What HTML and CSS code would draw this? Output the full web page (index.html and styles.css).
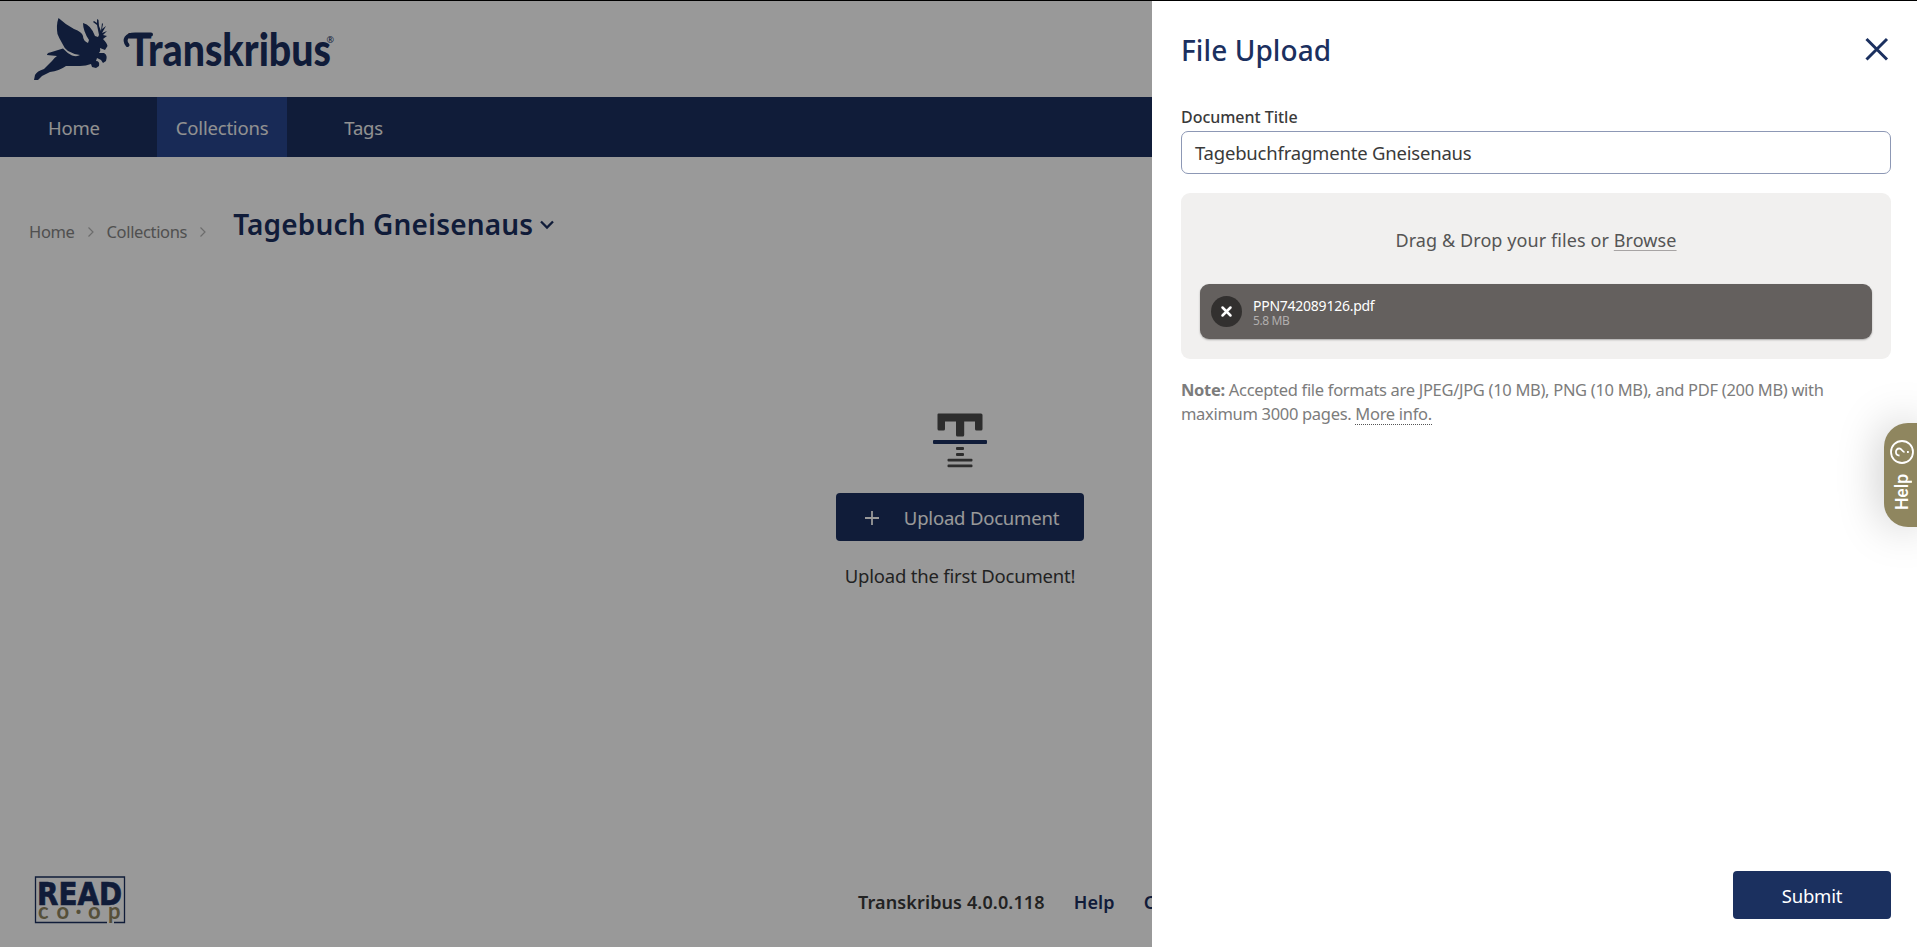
FILE: index.html
```html
<!DOCTYPE html>
<html lang="en">
<head>
<meta charset="utf-8">
<title>Transkribus</title>
<link rel="stylesheet" href="styles.css">
</head>
<body>
<div class="app">
  <header class="header">
    <svg class="logo" width="310" height="72" viewBox="30 12 310 72" aria-label="Transkribus">
      <path d="M34 80 L35 75 Q37 71 44 69 L52 61 Q54 58 57 56 L47 55 Q47 53 50 52.500 L63 48.500 Q67 53 72 55.500 Q77 57 80 55 Q73 54 68 51 Q64 48 62 43 Q59 38 57.500 34 Q56 25 58.500 18 Q66 25 74 29 Q82 32 83 36 Q83 41 88 43 L89 40 Q83 31 83 23 Q91 25 95 36 L98 37 L99 35 L97 25 L93 22 L94 21 L97 23 L97 19 L98.500 20 L99 26 L101 31 L102 23 L103 24 L102 29 L106 26 L102 33 L107 31 L103 35 L107 36 L103 39 Q107 43 107.500 46 L105 50 L100 48 Q101 51 99 53 L104 53 Q108 55 106 61 L103 63 L101 60 L97 58 L96 61 Q100 61 99 66 L96 68 L92 67 L91 64 Q86 66 80 66 L66 66 Q59 71 50 72 L42 76 L38 80 Z"/>
      <path class="swash" d="M127.500 45 C123.500 40 126 34.500 135 34.500 L151 34.500"/>
      <text class="logo-text" x="128" y="66" textLength="203" lengthAdjust="spacingAndGlyphs">Transkribus</text>
      <text class="logo-mark" x="326.500" y="42.500">®</text>
    </svg>
  </header>
  <nav class="nav">
    <a class="nav-item">Home</a>
    <a class="nav-item active">Collections</a>
    <a class="nav-item">Tags</a>
  </nav>
  <div class="breadcrumbs">
    <span class="crumb">Home</span>
    <svg class="sep" width="8" height="12" viewBox="0 0 8 12"><path d="M1.500 1.500 L6 6 L1.500 10.500"/></svg>
    <span class="crumb">Collections</span>
    <svg class="sep" width="8" height="12" viewBox="0 0 8 12"><path d="M1.500 1.500 L6 6 L1.500 10.500"/></svg>
    <h1>Tagebuch Gneisenaus</h1>
    <svg class="caret" width="16" height="10" viewBox="0 0 16 10"><path d="M2 1.500 L8 7.500 L14 1.500"/></svg>
  </div>
  <main class="empty">
    <svg class="t-icon" width="56" height="56" viewBox="0 0 56 56">
      <path class="ink" d="M6.500 1.500 H49 Q50.500 1.500 50.500 3 V17 Q50.500 18.500 49 18.500 H44.500 Q43 18.500 43 17 V9.500 H32.200 V23 Q32.200 24.500 30.700 24.500 H25.500 Q24 24.500 24 23 V9.500 H13 V17 Q13 18.500 11.500 18.500 H7 Q5.500 18.500 5.500 17 V2.500 Q5.500 1.500 6.500 1.500 Z"/>
      <rect class="bar" x="1" y="28" width="54" height="4" rx="1"/>
      <rect class="ink" x="24" y="35" width="8" height="3" rx="1"/>
      <rect class="ink" x="24" y="41" width="8" height="3" rx="1"/>
      <rect class="ink" x="15.500" y="46.700" width="25" height="2.800" rx="1"/>
      <rect class="ink" x="15.500" y="52.500" width="25" height="2.800" rx="1"/>
    </svg>
    <button class="btn upload">
      <svg width="16" height="16" viewBox="0 0 16 16"><path d="M8 1 V15 M1 8 H15"/></svg>
      <span>Upload Document</span>
    </button>
    <p class="first">Upload the first Document!</p>
  </main>
  <footer class="footer">
    <svg class="read" width="93" height="49" viewBox="0 0 93 49" aria-label="READ co-op">
      <path class="frame" d="M73 46.500 H1.500 V1 H90.500 V46.500 H80"/>
      <text class="read-a" x="3" y="28.500" textLength="85" lengthAdjust="spacingAndGlyphs">READ</text>
      <text class="read-b" x="4 22.500 41.500 54 74" y="43">co·op</text>
    </svg>
    <div class="footer-links"><span>Transkribus 4.0.0.118</span><a>Help</a><a>Contact</a></div>
  </footer>
</div>
<div class="overlay"></div>
<aside class="panel">
  <div class="panel-head">
    <h2>File Upload</h2>
    <svg width="24" height="24" viewBox="0 0 24 24"><path d="M1.500 2 L22 22.500 M22 2 L1.500 22.500"/></svg>
  </div>
  <label class="label">Document Title</label>
  <div class="input">Tagebuchfragmente Gneisenaus</div>
  <div class="drop">
    <div class="drop-label">Drag &amp; Drop your files or <span>Browse</span></div>
    <div class="file">
      <svg width="31" height="31" viewBox="0 0 31 31"><circle cx="15.500" cy="15.500" r="15.500"/><path d="M11.500 11.500 L19.500 19.500 M19.500 11.500 L11.500 19.500"/></svg>
      <div class="file-info"><div class="file-name">PPN742089126.pdf</div><div class="file-size">5.8 MB</div></div>
    </div>
  </div>
  <p class="note"><b>Note:</b> Accepted file formats are JPEG/JPG (10 MB), PNG (10 MB), and PDF (200 MB) with<br>maximum 3000 pages. <a>More info.</a></p>
  <button class="btn submit"><span>Submit</span></button>
</aside>
<div class="help">
  <svg width="24" height="24" viewBox="0 0 24 24"><circle cx="12" cy="12" r="11"/><path d="M8.500 9.500 C8.500 4.800 15.500 4.800 15.500 9.200 C15.500 12 12 12 12 14.500"/><path d="M12 17 V18.800"/></svg>
  <span>Help</span>
</div>
</body>
</html>
```
FILE: styles.css
```css
* { box-sizing: border-box; }
body {
  margin: 0;
  width: 1917px;
  height: 947px;
  overflow: hidden;
  position: relative;
  font-family: "Noto Sans", sans-serif;
  font-size: 18.500px;
  letter-spacing: -0.2px;
  color: #3a3a3a;
}
h1, h2, p { margin: 0; }
.app { height: 947px; display: flex; flex-direction: column; background: #fff; }
.header { height: 97px; padding: 12px 30px 0; }
.logo { display: block; fill: #1b305f; overflow: visible; letter-spacing: 0; }
.logo-text { font: 900 46px "Lato", sans-serif; }
.logo-mark { font: 9px "Noto Sans", sans-serif; }
.logo .swash { fill: none; stroke: #1b305f; stroke-width: 4; stroke-linecap: round; }
.nav { height: 60px; background: #1b305f; display: flex; gap: 38px; padding-left: 29px; }
.nav-item { padding: 0 19px; line-height: 62px; color: #f2f2f2; }
.nav-item.active { background: #28478f; }
.breadcrumbs { display: flex; align-items: flex-start; padding: 46px 29px 0; height: 90px; color: #858585; }
.breadcrumbs path { fill: none; }
.crumb { margin-top: 17px; font-size: 16.500px; line-height: 24px; letter-spacing: -0.35px; }
.sep { margin: 23px 12px 0; }
.sep path { stroke: #b5b5b5; stroke-width: 1.200; }
.breadcrumbs h1 { margin-left: 14px; font-size: 28px; line-height: 42px; font-weight: 600; letter-spacing: 0.15px; color: #1b305f; }
.caret { margin: 17px 0 0 6px; }
.caret path { stroke: #1b305f; stroke-width: 2.300; }
.empty { flex: 1; display: flex; flex-direction: column; align-items: center; padding-top: 165px; padding-left: 3px; }
.ink { fill: #4b4b4b; }
.bar { fill: #1b305f; }
.btn { height: 48px; border: 0; border-radius: 4px; background: #1b305f; color: #fff; font: 18.500px "Noto Sans", sans-serif; letter-spacing: -0.2px; display: flex; align-items: center; justify-content: center; padding: 1px 0 0; }
.upload { width: 248px; margin-top: 25px; gap: 24px; padding-left: 3px; }
.upload path { stroke: #fff; stroke-width: 1.800; }
.first { margin-top: 22px; line-height: 26px; }
.footer { height: 79px; display: flex; padding-left: 34px; }
.read { margin-top: 8px; overflow: visible; letter-spacing: 0; }
.frame { fill: none; stroke: #1b305f; stroke-width: 1.300; }
.read-a { font: 700 32.500px "DejaVu Sans", sans-serif; fill: #1b305f; stroke: #1b305f; stroke-width: 0.700; }
.read-b { font: 700 22px "Lato", sans-serif; fill: #8f865f; }
.footer-links { display: flex; gap: 29px; margin: 21px 0 0 731px; font-size: 18px; letter-spacing: 0.12px; font-weight: 600; line-height: 26px; }
.footer-links a { color: #1b305f; }
.overlay { position: absolute; inset: 0; background: rgba(0, 0, 0, 0.4); border-top: 1px solid #000; }
.panel { position: absolute; top: 1px; right: 0; width: 765px; height: 946px; padding: 0 26px 28px 29px; background: #fff; display: flex; flex-direction: column; }
.panel-head { display: flex; justify-content: space-between; padding: 30px 2px 0 0; height: 102px; }
.panel-head h2 { font-size: 28px; line-height: 38px; font-weight: 500; letter-spacing: 0.08px; color: #1b305f; }
.panel-head svg { margin-top: 6px; }
.panel-head path { stroke: #1b305f; stroke-width: 3; }
.label { font-size: 16px; line-height: 28px; font-weight: 500; letter-spacing: -0.03px; }
.input { height: 43px; border: 1px solid #8d98b5; border-radius: 7px; padding-left: 13px; line-height: 41px; }
.drop { height: 166px; margin-top: 19px; border-radius: 9px; background: #f1f0ef; padding: 0 19px; }
.drop-label { height: 91px; line-height: 95px; text-align: center; font-size: 18px; letter-spacing: 0.09px; color: #555; }
.drop-label span { text-decoration: underline; text-decoration-color: #a7a4a4; text-underline-offset: 3px; text-decoration-thickness: 1px; }
.file { height: 55px; border-radius: 9px; background: #64605e; box-shadow: 0 1px 2px rgba(0, 0, 0, 0.3); display: flex; align-items: center; gap: 11px; padding: 0 11px; color: #fff; }
.file circle { fill: #32302f; }
.file path { stroke: #fff; stroke-width: 2.500; stroke-linecap: round; }
.file-info { padding-top: 1px; }
.file-name { font-size: 14px; line-height: 17px; letter-spacing: -0.25px; }
.file-size { font-size: 12px; line-height: 14px; letter-spacing: -0.4px; color: #b1afae; }
.note { margin-top: 19px; font-size: 16.500px; line-height: 24px; letter-spacing: -0.31px; color: #7c7c7c; white-space: nowrap; }
.note a { display: inline-block; line-height: 21px; border-bottom: 1px dotted #555; }
.submit { width: 158px; margin: auto 0 0 auto; }
.help { position: absolute; right: 0; top: 423px; width: 33px; height: 104px; border-radius: 24px 0 0 24px; background: #8f865f; box-shadow: 0 0 45px rgba(0, 0, 0, 0.25); display: flex; flex-direction: column; align-items: center; gap: 10px; padding: 17px 0 0 3px; color: #fff; letter-spacing: 0; }
.help svg { transform: rotate(-90deg); flex: none; fill: none; stroke: #fff; stroke-width: 1.800; }
.help span { writing-mode: vertical-rl; transform: rotate(180deg); font: 500 17.500px/22px "Roboto", sans-serif; }
```
